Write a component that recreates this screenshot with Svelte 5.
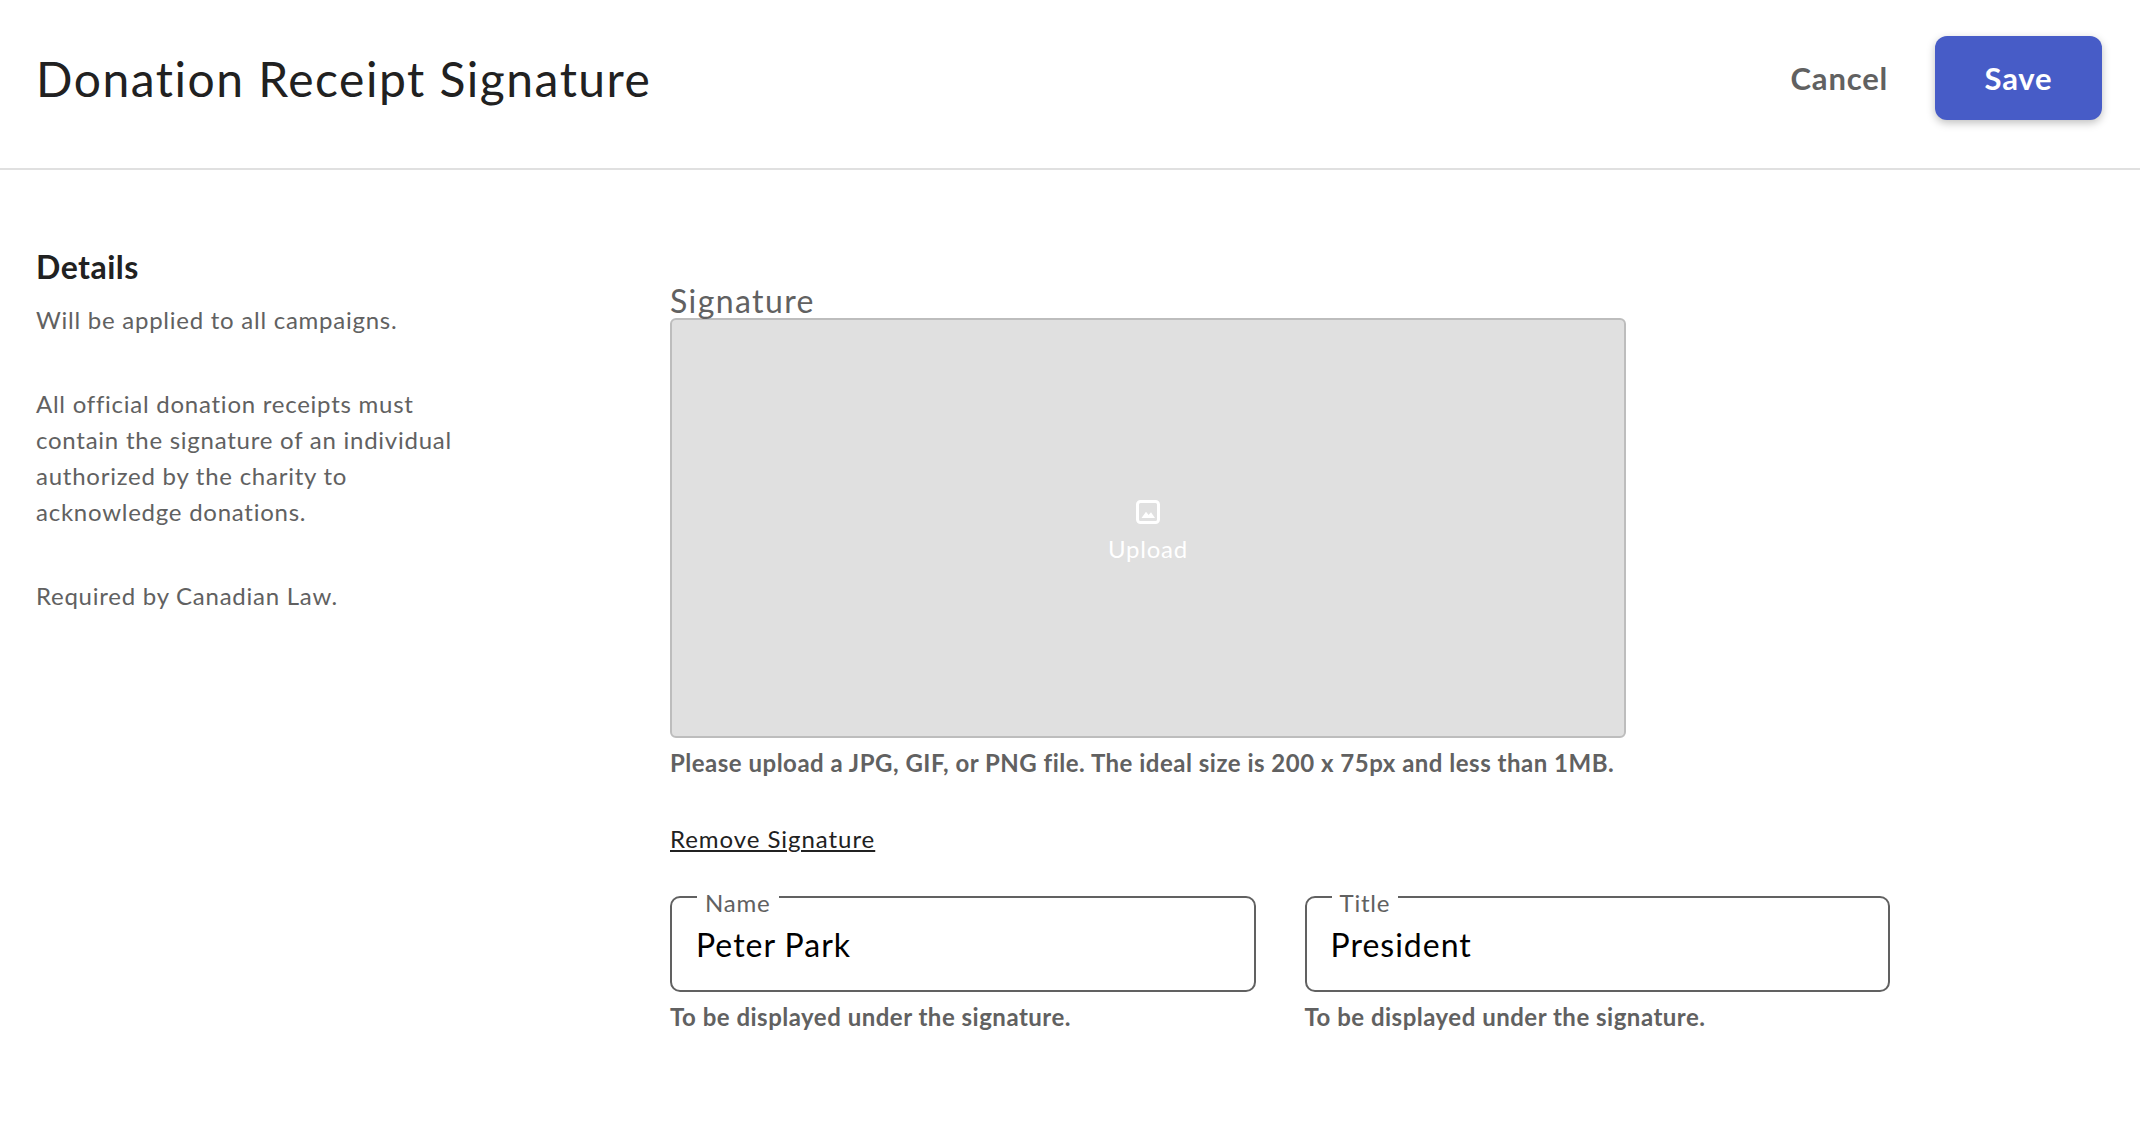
<script>
  let name = $state('Peter Park');
  let title = $state('President');
</script>

<header class="top">
  <h1>Donation Receipt Signature</h1>
  <div class="actions">
    <button class="cancel">Cancel</button>
    <button class="save">Save</button>
  </div>
</header>

<main class="page">
  <aside class="intro">
    <h2>Details</h2>
    <p class="first">Will be applied to all campaigns.</p>
    <p>All official donation receipts must contain the signature of an individual authorized by the charity to acknowledge donations.</p>
    <p>Required by Canadian Law.</p>
  </aside>

  <section class="form">
    <div class="label">Signature</div>
    <div class="dropzone">
      <svg width="24" height="24" viewBox="0 0 24 24" fill="none">
        <rect x="1.5" y="1.5" width="21" height="21" rx="3" stroke="#fff" stroke-width="3" />
        <path d="M5.5 18 L10 11.7 L12.6 15 L15 12.2 L19 18 Z" fill="#fff" />
      </svg>
      <span>Upload</span>
    </div>
    <div class="hint">Please upload a JPG, GIF, or PNG file. The ideal size is 200 x 75px and less than 1MB.</div>
    <a class="remove" href="#top">Remove Signature</a>

    <div class="fields">
      <div>
        <fieldset>
          <legend>Name</legend>
          <input bind:value={name} />
        </fieldset>
        <div class="hint">To be displayed under the signature.</div>
      </div>
      <div>
        <fieldset>
          <legend>Title</legend>
          <input bind:value={title} />
        </fieldset>
        <div class="hint">To be displayed under the signature.</div>
      </div>
    </div>
  </section>
</main>

<style>
  :global(body) {
    background: #fff;
    font-family: Lato, "Liberation Sans", sans-serif;
    color: #616161;
  }
  .top {
    display: flex;
    align-items: center;
    justify-content: space-between;
    height: 156px;
    padding: 0 38px 12px 36px;
    border-bottom: 2px solid #e0e0e0;
  }
  h1 {
    margin: 0;
    font-size: 48px;
    font-weight: 400;
    letter-spacing: 1.5px;
    color: #212121;
  }
  .actions {
    display: flex;
    align-items: center;
    gap: 47px;
  }
  button {
    border: 0;
    background: none;
    font: 700 31px Lato, sans-serif;
    letter-spacing: 0.8px;
    padding: 0;
  }
  .cancel {
    color: #616161;
  }
  .save {
    width: 167px;
    height: 84px;
    border-radius: 12px;
    background: #475cc7;
    color: #fff;
    box-shadow: 0 3px 8px rgba(0, 0, 0, 0.25);
  }
  .page {
    display: grid;
    grid-template-columns: 634px 1220px;
    padding: 0 36px;
  }
  .intro {
    padding-top: 77px;
  }
  h2 {
    margin: 0;
    font-size: 32px;
    line-height: 40px;
    font-weight: 700;
    letter-spacing: 0.5px;
    color: #212121;
  }
  p {
    margin: 48px 0 0;
    max-width: 430px;
    font-size: 24px;
    line-height: 36px;
    letter-spacing: 0.75px;
  }
  p.first {
    margin-top: 15px;
  }
  .form {
    padding-top: 114px;
  }
  .label {
    font-size: 32px;
    line-height: 34px;
    letter-spacing: 1.4px;
  }
  .dropzone {
    box-sizing: border-box;
    display: flex;
    flex-direction: column;
    align-items: center;
    justify-content: center;
    gap: 7px;
    width: 956px;
    height: 420px;
    padding-top: 10px;
    background: #e0e0e0;
    border: 2px solid #bdbdbd;
    border-radius: 6px;
    color: #fff;
    font-size: 24px;
    line-height: 36px;
    letter-spacing: 0.8px;
  }
  .hint {
    margin-top: 7px;
    font-size: 24px;
    line-height: 36px;
    font-weight: 700;
    letter-spacing: 0.5px;
    color: #616161;
  }
  .remove {
    display: block;
    width: fit-content;
    margin-top: 40px;
    font-size: 24px;
    line-height: 36px;
    letter-spacing: 0.95px;
    color: #212121;
  }
  .fields {
    display: grid;
    grid-template-columns: 1fr 1fr;
    gap: 49px;
    margin-top: 22px;
  }
  fieldset {
    box-sizing: border-box;
    height: 113px;
    margin: 0;
    padding: 0 24px;
    border: 2px solid #616161;
    border-radius: 10px;
  }
  legend {
    margin-left: 1px;
    padding: 12px 8px 0;
    font-size: 24px;
    line-height: 24px;
    letter-spacing: 0.8px;
    color: #616161;
  }
  input {
    display: block;
    width: 100%;
    height: 58px;
    padding: 0;
    border: 0;
    outline: 0;
    background: none;
    font: 400 32px Lato, sans-serif;
    letter-spacing: 1px;
    color: #000;
  }
</style>
